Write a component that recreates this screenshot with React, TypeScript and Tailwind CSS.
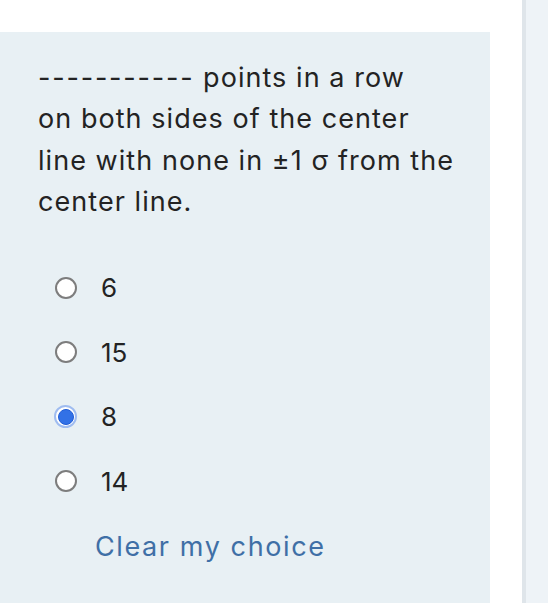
import React from "react";

const options = [
  { label: "6", checked: false },
  { label: "15", checked: false },
  { label: "8", checked: true },
  { label: "14", checked: false },
];

function Radio({ checked }: { checked: boolean }) {
  if (checked) {
    return (
      <span className="flex h-[23px] w-[23px] items-center justify-center rounded-full border-[2px] border-[#9fbcf0] bg-white">
        <span className="h-[16px] w-[16px] rounded-full border-[1.5px] border-[#1f5cd6] bg-[#3271e6]" />
      </span>
    );
  }
  return <span className="block h-[22px] w-[22px] rounded-full border-[2px] border-[#7d7d7d] bg-white" />;
}

export default function App() {
  return (
    <div className="flex h-[603px] w-[548px] bg-white" style={{ fontFamily: "Inter, 'Open Sans', sans-serif" }}>
      <div className="flex w-[490px] flex-col pt-[32px]">
        <div className="flex flex-1 flex-col bg-[#e8f0f4] pl-[38px] pr-[10px] pt-[25px]">
          <p className="whitespace-nowrap text-[27px] leading-[41.3px] tracking-[1.05px] text-[#232323]">
            <span className="tracking-[1.8px]">-----------</span> points in a row
            <br />
            on both sides of the center
            <br />
            line with none in ±1 σ from the
            <br />
            center line.
          </p>
          <div className="mt-[54px] flex flex-col gap-[41.5px] pl-[16px]">
            {options.map((o) => (
              <div key={o.label} className="flex h-[23px] items-center">
                <div className="flex w-[23px] justify-center">
                  <Radio checked={o.checked} />
                </div>
                <span className="ml-[24px] text-[26px] leading-[23px] text-[#232323]">{o.label}</span>
              </div>
            ))}
          </div>
          <div className="mt-[38px] pl-[57px] text-[27px] leading-[32px] tracking-[1.6px] text-[#3f6fa6]">
            Clear my choice
          </div>
        </div>
      </div>
      <div className="w-[32px] bg-white" />
      <div className="w-[4px] bg-[#dfe5ea]" />
      <div className="flex-1 bg-[#eef3f7]" />
    </div>
  );
}
